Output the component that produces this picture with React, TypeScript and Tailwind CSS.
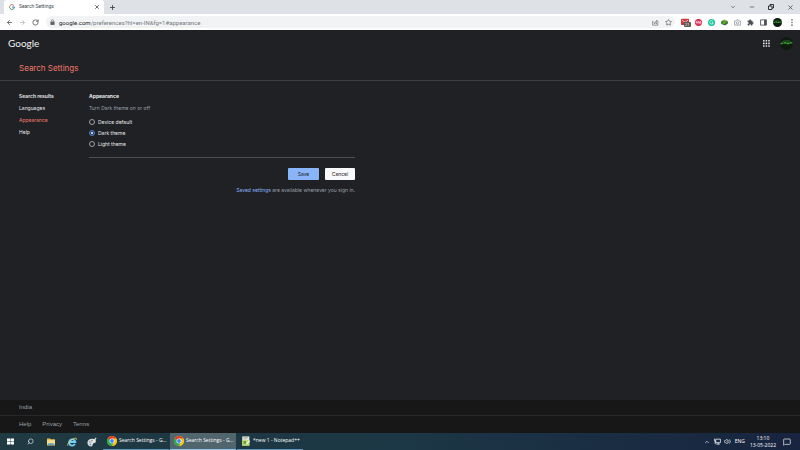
import React, { useState } from 'react';
import {
  ArrowLeft,
  ArrowRight,
  ChevronDown,
  ChevronUp,
  Minus,
  MessageSquare,
  Plus,
  RotateCw,
  Search,
  Star,
  Volume2,
  X,
} from 'lucide-react';

const navItems = ['Search results', 'Languages', 'Appearance', 'Help'];
const themes = ['Device default', 'Dark theme', 'Light theme'];
const footerLinks = ['Help', 'Privacy', 'Terms'];

function GoogleG() {
  return (
    <svg viewBox="0 0 24 24" className="size-[6px] shrink-0" fill="none" strokeWidth="4">
      <path d="M19 5.5A10 10 0 0 0 3.6 7" stroke="#b8635a" />
      <path d="M3.6 7a10 10 0 0 0 0 10" stroke="#9a9a5c" />
      <path d="M3.6 17a10 10 0 0 0 14.6 2.4" stroke="#3f9160" />
      <path d="M18.2 19.4A10 10 0 0 0 22 12H12" stroke="#4a78b8" />
    </svg>
  );
}

function ChromeLogo() {
  return (
    <svg viewBox="0 0 24 24" className="size-[10px] shrink-0">
      <circle cx="12" cy="12" r="12" fill="#fbc117" />
      <path d="M12 12 1.6 6A12 12 0 0 1 22.4 6Z" fill="#e33b2e" />
      <path d="M12 12 1.6 6A12 12 0 0 0 12 24L17 15Z" fill="#2da94f" />
      <path d="M12 6h10.4A12 12 0 0 1 12 24l5.2-9Z" fill="#fbc117" />
      <circle cx="12" cy="12" r="6" fill="#fff" />
      <circle cx="12" cy="12" r="4.6" fill="#4285f4" />
    </svg>
  );
}

function Avatar({ className }: { className: string }) {
  return (
    <svg viewBox="0 0 24 24" className={className}>
      <circle cx="12" cy="12" r="12" fill="#0d1a10" />
      <path d="M3 8c3-3 15-3 18 0l-1 5H4z" fill="#1b431d" />
      <path d="M1 12h4m2-1h4m1 1h5m1-1h5" stroke="#3aa62d" strokeWidth="2.4" />
    </svg>
  );
}

function AppsGrid() {
  return (
    <svg viewBox="0 0 7 7" className="size-[7px]" fill="#e8eaed">
      {[0, 2.6, 5.2].map((y) =>
        [0, 2.6, 5.2].map((x) => <rect key={`${x}-${y}`} x={x} y={y} width="1.6" height="1.6" rx="0.5" />)
      )}
    </svg>
  );
}

function TabStrip() {
  return (
    <div className="flex h-[14px] items-center bg-[#dee1e6]">
      <div className="ml-1 flex h-full w-[100px] items-center gap-1 rounded-t-[3px] bg-white pr-1 pl-[5px]">
        <GoogleG />
        <span className="flex-1 text-[5px] text-[#45494d]">Search Settings</span>
        <button aria-label="Close tab">
          <X className="size-[6px] text-[#3c4043]" strokeWidth={3} />
        </button>
      </div>
      <button aria-label="New tab" className="ml-[5px]">
        <Plus className="size-[7px] text-[#3c4043]" strokeWidth={3} />
      </button>
      <div className="ml-auto flex items-center gap-[13px] pr-[6px] text-[#3c4043]">
        <button aria-label="Search tabs">
          <ChevronDown className="size-[6px]" strokeWidth={2.5} />
        </button>
        <button aria-label="Minimize">
          <Minus className="size-[6px]" strokeWidth={2.5} />
        </button>
        <button aria-label="Restore">
          <svg viewBox="0 0 12 12" className="size-[6px]" fill="none" stroke="#202124" strokeWidth="1.8">
            <path d="M1 4h7v7H1zM4 4V1h7v7H8" />
          </svg>
        </button>
        <button aria-label="Close">
          <X className="size-[7px]" strokeWidth={2.5} />
        </button>
      </div>
    </div>
  );
}

function Extensions() {
  return (
    <>
      <button aria-label="Mail" className="relative">
        <svg viewBox="0 0 24 24" className="size-2">
          <rect y="2" width="24" height="19" rx="2" fill="#c9363b" />
          <path d="m3 6 9 7 9-7" fill="none" stroke="#f1c6c6" strokeWidth="3" />
        </svg>
        <span className="absolute top-1 left-[3px] rounded-[1px] bg-[#5c5451] px-px text-[4px] leading-[5px] text-white">21</span>
      </button>
      <button aria-label="Ad blocker">
        <svg viewBox="0 0 24 24" className="size-[7px]">
          <path d="M7 0h10l7 7v10l-7 7H7l-7-7V7z" fill="#df3355" />
          <path d="M4 15v-6h3v6m3 0V9h3v6m3-6h4v6h-4z" fill="none" stroke="#fff" strokeWidth="2" />
        </svg>
      </button>
      <button aria-label="Grammar">
        <svg viewBox="0 0 24 24" className="size-[7px]">
          <circle cx="12" cy="12" r="12" fill="#15c39a" />
          <path d="M17 8a6 6 0 1 0 1 5h-5" fill="none" stroke="#fff" strokeWidth="2.5" />
        </svg>
      </button>
      <button aria-label="Download manager">
        <svg viewBox="0 0 24 24" className="size-[7px]">
          <ellipse cx="12" cy="12" rx="12" ry="8" fill="#367a2f" />
          <path d="M12 0v9h6l-8 10-6-8h4V3z" fill="#65b32e" />
          <path d="m14 6 7-3-3 7z" fill="#e2b53a" />
          <path d="M8 17h9l-3 6z" fill="#355868" />
        </svg>
      </button>
      <button aria-label="Screenshot">
        <svg viewBox="0 0 24 24" className="size-[7px]" fill="none" stroke="#85898d" strokeWidth="2.4">
          <path d="M2 7h5l2-4h6l2 4h5v14H2z" />
          <circle cx="12" cy="13.5" r="4" />
        </svg>
      </button>
      <button aria-label="Extensions">
        <svg viewBox="0 0 24 24" className="size-[7px]" fill="#4d5156">
          <path d="M20.5 11H19V7a2 2 0 0 0-2-2h-4V3.500a2.500 2.500 0 0 0-5 0V5H4a2 2 0 0 0-2 2v3.800h1.500a2.700 2.700 0 0 1 0 5.400H2V20a2 2 0 0 0 2 2h3.800v-1.500a2.700 2.700 0 0 1 5.400 0V22H17a2 2 0 0 0 2-2v-4h1.500a2.500 2.500 0 0 0 0-5z" />
        </svg>
      </button>
      <button aria-label="Side panel">
        <svg viewBox="0 0 24 24" className="size-[7px]">
          <path d="M2 3h20v18H2z" fill="none" stroke="#4d5156" strokeWidth="3" />
          <path d="M14 3h8v18h-8z" fill="#4d5156" />
        </svg>
      </button>
    </>
  );
}

function Toolbar() {
  return (
    <div className="flex h-4 items-center bg-white pr-[5px] pl-[6px] text-[#5f6368]">
      <button aria-label="Back">
        <ArrowLeft className="size-[7px]" strokeWidth={3} />
      </button>
      <button aria-label="Forward" className="ml-[6px]">
        <ArrowRight className="size-[7px] text-[#babcbe]" strokeWidth={3} />
      </button>
      <button aria-label="Reload" className="ml-[6px]">
        <RotateCw className="size-[7px]" strokeWidth={3} />
      </button>
      <div className="mr-[6px] ml-[7px] flex h-3 flex-1 items-center rounded-full bg-[#f1f3f4] pr-[3px] pl-1">
        <svg viewBox="0 0 12 14" className="h-[6px] w-[5px]">
          <path d="M1 6h10v8H1z" fill="#5f6368" />
          <path d="M3.500 6V4a2.500 2.500 0 0 1 5 0v2" fill="none" stroke="#5f6368" strokeWidth="1.600" />
        </svg>
        <p className="ml-1 flex-1 text-[6px] text-[#777b7f]">
          <span className="text-[#202124]">google.com</span>/preferences?hl=en-IN&amp;fg=1#appearance
        </p>
        <button aria-label="Share">
          <svg viewBox="0 0 24 24" className="size-[7px]" fill="none" stroke="#5f6368" strokeWidth="2.200">
            <path d="M5 8H2v13h18v-5" />
            <path d="M7 16c1-5 4-7 9-7V4l6 7-6 6v-4c-4 0-7 1-9 3z" />
          </svg>
        </button>
        <button aria-label="Bookmark" className="ml-[6px]">
          <Star className="size-[7px]" strokeWidth={2.5} />
        </button>
      </div>
      <div className="flex items-center gap-[6px]">
        <Extensions />
        <button aria-label="Profile">
          <Avatar className="size-[9px]" />
        </button>
        <button aria-label="Menu" className="flex w-[7px] justify-center">
          <svg viewBox="0 0 2 8" className="h-[7px] w-[2px]" fill="#5f6368">
            <circle cx="1" cy="1" r="0.900" />
            <circle cx="1" cy="4" r="0.900" />
            <circle cx="1" cy="7" r="0.900" />
          </svg>
        </button>
      </div>
    </div>
  );
}

function TaskButton({ label, active, icon }: { label: string; active?: boolean; icon: React.ReactNode }) {
  return (
    <button
      className={`flex h-full w-[66px] items-center gap-[2px] border-b pl-1 text-[5px] whitespace-nowrap text-white ${
        active ? 'border-[#8ec5ec] bg-[#50656e]' : 'border-[#5d95bd]'
      }`}
    >
      {icon}
      {label}
    </button>
  );
}

function Taskbar() {
  return (
    <div className="flex h-[17px] items-center bg-linear-to-r from-[#203a43] via-[#1c3745] to-[#182440] font-['Open_Sans','Noto_Sans',sans-serif] text-white">
      <div className="flex items-center gap-3 pl-[7px]">
        <button aria-label="Start">
          <svg viewBox="0 0 16 16" className="size-[7px]" fill="#fff">
            <path d="M0 1h7v6.500H0zM8 1h8v6.500H8zM0 8.500h7V15H0zM8 8.500h8V15H8z" />
          </svg>
        </button>
        <button aria-label="Search" className="ml-px">
          <Search className="size-[7px] -scale-x-100" />
        </button>
        <button aria-label="File Explorer">
          <svg viewBox="0 0 20 18" className="h-2 w-[10px]">
            <path d="M1 1h7l2 2h9v14H1z" fill="#e8b94b" />
            <path d="M1 5h18v8H1z" fill="#fbdf8d" />
            <path d="M4 17v-5h12v5h-3v-2H7v2z" fill="#4b9fd8" />
          </svg>
        </button>
        <button aria-label="Internet Explorer" className="-ml-px">
          <svg viewBox="0 0 24 24" className="size-[10px]" fill="none">
            <path d="M19 17a7.500 7.500 0 1 1 1-5H6" stroke="#72d3f7" strokeWidth="4.500" />
            <path d="M2 21C-1 15 15 1 22 3c1 1 1 3 0 4" stroke="#e9d36a" strokeWidth="2" />
          </svg>
        </button>
        <button aria-label="Paint" className="-ml-[2px]">
          <svg viewBox="0 0 24 24" className="size-[10px]">
            <path d="M1 14C1 6 9 3 17 5c7 3 5 10-1 10-3 0-1 7-6 8-5 0-9-4-9-9z" fill="#d4dce1" />
            <circle cx="7" cy="12" r="1.800" fill="#5a8fb0" />
            <circle cx="12" cy="9" r="1.600" fill="#c05a4a" />
            <circle cx="8" cy="18" r="1.600" fill="#58727c" />
            <path d="m14 13 8-11" stroke="#f2efe4" strokeWidth="2.500" />
          </svg>
        </button>
      </div>
      <div className="ml-[6px] flex h-full gap-px">
        <TaskButton label="Search Settings - G..." icon={<ChromeLogo />} />
        <TaskButton label="Search Settings - G..." active icon={<ChromeLogo />} />
        <TaskButton
          label="*new 1 - Notepad++"
          icon={
            <svg viewBox="0 0 24 24" className="size-[10px] shrink-0">
              <path d="M3 1h17v22H3z" fill="#e9efdc" />
              <path d="M3 10h17v13H3z" fill="#b5d964" />
              <path d="M6 4h11M6 7h8" stroke="#8a948a" strokeWidth="1.500" />
              <path d="M6 12h6v7H6z" fill="#6e9a3b" />
              <path d="m12 18 7-8 3 2-7 8z" fill="#f3f6ea" />
            </svg>
          }
        />
      </div>
      <div className="ml-auto flex h-full items-center">
        <ChevronUp className="size-[6px]" strokeWidth={2.5} />
        <svg viewBox="0 0 24 24" className="ml-1 size-[7px]" fill="none" stroke="#fff" strokeWidth="2.500">
          <path d="M6 4h16v12H6zM14 16v5M8 21h12M2 2v8h4M4 10v11" />
        </svg>
        <Volume2 className="ml-[3px] size-[7px]" />
        <span className="ml-1 text-[5px]">ENG</span>
        <div className="ml-[5px] text-center text-[5px] leading-[7px]">
          <p>13:10</p>
          <p>13-05-2022</p>
        </div>
        <MessageSquare className="mr-[9px] ml-[7px] size-2" />
      </div>
    </div>
  );
}

export default function App() {
  const [theme, setTheme] = useState('Dark theme');

  return (
    <div className="flex min-h-screen flex-col bg-[#202124] font-['Inter','Liberation_Sans',sans-serif] text-[#e8eaed]">
      <div className="font-['Roboto',sans-serif]">
        <TabStrip />
        <Toolbar />
      </div>

      <header className="border-b border-[#3c4043]">
        <div className="flex h-[26px] items-center justify-between pr-[7px] pl-2">
          <a href="#home" className="font-['Lato',sans-serif] text-[10px] text-[#f1f3f4]">
            Google
          </a>
          <div className="flex items-center gap-[10px]">
            <button aria-label="Google apps">
              <AppsGrid />
            </button>
            <button aria-label="Account">
              <Avatar className="size-[13px]" />
            </button>
          </div>
        </div>
        <h1 className="flex h-6 items-center pl-[19px] text-[8px] text-[#f0796d]">Search Settings</h1>
      </header>

      <main className="flex flex-1 pt-[9px] pl-[19px] text-[5px] leading-[12px]">
        <nav className="flex w-[70px] flex-col">
          {navItems.map((item, i) => (
            <a
              key={item}
              href="#appearance"
              className={item === 'Appearance' ? 'text-[#f0796d]' : i === 0 ? 'font-semibold' : ''}
            >
              {item}
            </a>
          ))}
        </nav>
        <form className="w-[266px]" onSubmit={(e) => e.preventDefault()}>
          <fieldset className="border-b border-[#4b4e52] pb-2">
            <legend className="font-bold">Appearance</legend>
            <p className="mb-[2px] text-[#9aa0a6]">Turn Dark theme on or off</p>
            {themes.map((t) => (
              <label key={t} className="flex h-[11px] items-center gap-[3px]">
                <span className="grid size-[6px] place-items-center">
                  <input
                    type="radio"
                    name="theme"
                    checked={theme === t}
                    onChange={() => setTheme(t)}
                    className="peer col-start-1 row-start-1 size-[6px] appearance-none rounded-full border border-[#9aa0a6] checked:border-[#4f82c4] checked:bg-[#1d3a66]"
                  />
                  <span className="pointer-events-none col-start-1 row-start-1 hidden size-[2px] rounded-full bg-white peer-checked:block" />
                </span>
                {t}
              </label>
            ))}
          </fieldset>
          <div className="mt-[10px] flex justify-end gap-[6px] text-[5px] text-[#202124]">
            <button type="submit" className="h-3 w-[31px] rounded-[1px] bg-[#8ab4f8]">
              Save
            </button>
            <button type="button" className="h-3 w-[30px] rounded-[1px] bg-[#f8f9fa]">
              Cancel
            </button>
          </div>
          <p className="mt-1 text-right text-[#9aa0a6]">
            <a href="#saved" className="text-[#8ab4f8]">
              Saved settings
            </a>{' '}
            are available whenever you sign in.
          </p>
        </form>
      </main>

      <footer className="bg-[#171717] font-['Liberation_Sans',Arial,sans-serif] text-[6px] text-[#9aa0a6]">
        <p className="flex h-4 items-center border-b border-[#26282a] pl-[19px]">India</p>
        <div className="flex h-[17px] items-center gap-[11px] pl-[19px]">
          {footerLinks.map((link) => (
            <a key={link} href="#footer">
              {link}
            </a>
          ))}
        </div>
      </footer>

      <Taskbar />
    </div>
  );
}
